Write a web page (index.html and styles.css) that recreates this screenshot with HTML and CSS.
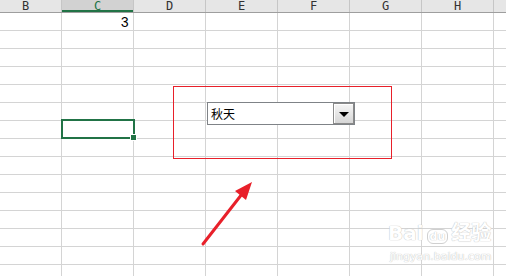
FILE: index.html
```html
<!DOCTYPE html>
<html lang="zh">
<head>
    <meta charset="UTF-8">
    <title>Sheet</title>
    <link rel="stylesheet" href="styles.css">
</head>
<body>
<div id="sheet">
    <div class="head-row">
        <div class="col-head">B</div>
        <div class="col-head active">C</div>
        <div class="col-head">D</div>
        <div class="col-head">E</div>
        <div class="col-head">F</div>
        <div class="col-head">G</div>
        <div class="col-head">H</div>
        <div class="col-head"></div>
    </div>
    <div id="grid"></div>

    <div class="selected"><span class="handle"></span></div>
    <div class="red-box"></div>
    <div class="combo">
        <span class="combo-text">秋天</span>
        <span class="combo-btn"><span class="tri"></span></span>
    </div>
    <svg class="arrow" width="506" height="276" viewBox="0 0 506 276">
        <line x1="203" y1="244" x2="242" y2="194" stroke="#e8202a" stroke-width="3" stroke-linecap="round"/>
        <polygon points="252,182 235,191 246,200" fill="#e8202a"/>
    </svg>
    <div class="mark">
        <div class="mark-top">Bai<span class="paw">du</span>经验</div>
        <div class="mark-url">jingyan.baidu.com</div>
    </div>
</div>
<script>
    // fill the body of the sheet with empty cells, "3" sits in C1
    let grid = document.getElementById("grid");
    for (let r = 0; r < 15; r++) {
        for (let c = 0; c < 8; c++) {
            let cell = document.createElement("div");
            cell.className = "cell";
            if (r == 0 && c == 1) cell.textContent = "3";
            grid.appendChild(cell);
        }
    }
</script>
</body>
</html>
```

FILE: styles.css
```css
body {
    margin: 0;
    background: #fff;
    overflow: hidden;
}
#sheet {
    position: relative;
    width: 506px;
    height: 276px;
    overflow: hidden;
}
.head-row {
    display: grid;
    grid-template-columns: repeat(8, 72px);
    margin-left: -10px;
    height: 13px;
    background: #e6e6e6;
    border-bottom: 1px solid #9e9e9e;
    box-sizing: border-box;
}
.col-head {
    border-right: 1px solid #c6c6c6;
    font-family: "DejaVu Sans Mono", monospace;
    font-size: 12px;
    line-height: 12px;
    color: #333;
    text-align: center;
}
.col-head.active {
    background: #d2d2d2;
    color: #217346;
    box-shadow: inset 0 -2px 0 #217346;
}
#grid {
    display: grid;
    grid-template-columns: repeat(8, 72px);
    grid-auto-rows: 18px;
    margin-left: -10px;
}
.cell {
    border-right: 1px solid #d4d4d4;
    border-bottom: 1px solid #d4d4d4;
    font-family: "Liberation Mono", monospace;
    font-size: 14px;
    line-height: 20px;
    text-align: right;
    padding-right: 4px;
    color: #000;
}
.selected {
    position: absolute;
    left: 61px;
    top: 119px;
    width: 74px;
    height: 20px;
    border: 2px solid #217346;
    box-sizing: border-box;
}
.handle {
    position: absolute;
    right: -4px;
    bottom: -4px;
    width: 5px;
    height: 5px;
    background: #217346;
    border: 1px solid #fff;
}
.red-box {
    position: absolute;
    left: 173px;
    top: 86px;
    width: 219px;
    height: 73px;
    border: 1px solid #e8202a;
    box-sizing: border-box;
}
.combo {
    position: absolute;
    left: 207px;
    top: 102px;
    width: 148px;
    height: 23px;
    border: 1px solid #7f8387;
    background: #fff;
    box-sizing: border-box;
    display: flex;
    align-items: center;
    justify-content: space-between;
}
.combo-text {
    font-family: "Noto Sans CJK SC", sans-serif;
    font-size: 12px;
    padding-left: 3px;
    color: #000;
}
.combo-btn {
    width: 21px;
    height: 21px;
    box-sizing: border-box;
    border: 1px solid #8a8a8a;
    background: linear-gradient(#f6f6f6, #d6d6d6);
    box-shadow: inset 1px 1px 0 #fff;
    display: flex;
    align-items: center;
    justify-content: center;
}
.tri {
    width: 0;
    height: 0;
    border-left: 5px solid transparent;
    border-right: 5px solid transparent;
    border-top: 5px solid #000;
    margin-top: 1px;
}
.arrow {
    position: absolute;
    left: 0;
    top: 0;
}
.mark {
    position: absolute;
    left: 388px;
    top: 220px;
    color: #fff;
    font-family: "DejaVu Sans", "Noto Sans CJK SC", sans-serif;
    text-shadow: 0 0 1px #c4c4c4, 0 0 1px #c4c4c4;
}
.mark-top {
    font-size: 20px;
    font-weight: bold;
    line-height: 26px;
}
.paw {
    font-size: 11px;
    border: 1px solid #d0d0d0;
    border-radius: 6px;
    padding: 0 2px;
    margin: 0 3px;
}
.mark-url {
    font-size: 11px;
    line-height: 14px;
    margin-left: 2px;
}
```
